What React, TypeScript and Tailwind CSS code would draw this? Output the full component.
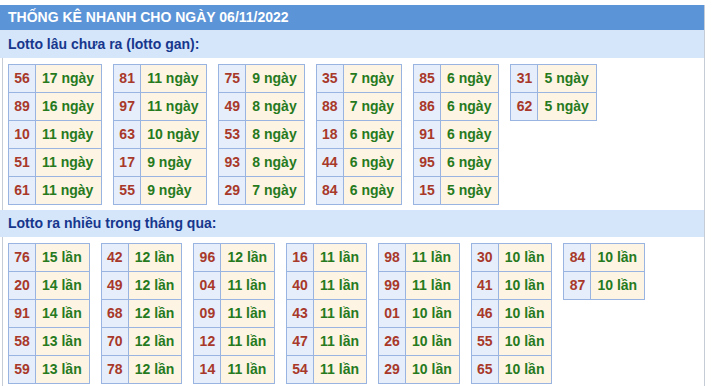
import React from "react";

type Row = [string, string];

const gan: Row[][] = [
  [["56", "17"], ["89", "16"], ["10", "11"], ["51", "11"], ["61", "11"]],
  [["81", "11"], ["97", "11"], ["63", "10"], ["17", "9"], ["55", "9"]],
  [["75", "9"], ["49", "8"], ["53", "8"], ["93", "8"], ["29", "7"]],
  [["35", "7"], ["88", "7"], ["18", "6"], ["44", "6"], ["84", "6"]],
  [["85", "6"], ["86", "6"], ["91", "6"], ["95", "6"], ["15", "5"]],
  [["31", "5"], ["62", "5"]],
];

const nhieu: Row[][] = [
  [["76", "15"], ["20", "14"], ["91", "14"], ["58", "13"], ["59", "13"]],
  [["42", "12"], ["49", "12"], ["68", "12"], ["70", "12"], ["78", "12"]],
  [["96", "12"], ["04", "11"], ["09", "11"], ["12", "11"], ["14", "11"]],
  [["16", "11"], ["40", "11"], ["43", "11"], ["47", "11"], ["54", "11"]],
  [["98", "11"], ["99", "11"], ["01", "10"], ["26", "10"], ["29", "10"]],
  [["30", "10"], ["41", "10"], ["46", "10"], ["55", "10"], ["65", "10"]],
  [["84", "10"], ["87", "10"]],
];

function Table({ rows, unit }: { rows: Row[]; unit: string }) {
  return (
    <div className="inline-grid grid-cols-[27px_auto] border-t border-l border-[#99b4e0]">
      {rows.map(([n, v], i) => (
        <React.Fragment key={i}>
          <div className="h-[28px] border-r border-b border-[#99b4e0] bg-[#e6eefb] text-[#a8392a] flex items-center justify-center">
            {n}
          </div>
          <div className="h-[28px] border-r border-b border-[#99b4e0] bg-[#fef4e3] text-[#267a1e] flex items-center pl-[6px] pr-[7px] whitespace-nowrap">
            {v} {unit}
          </div>
        </React.Fragment>
      ))}
    </div>
  );
}

function Sub({ children, h }: { children: React.ReactNode; h: string }) {
  return (
    <div className={`${h} bg-[#d5e6fa] text-[#17378d] font-bold text-[14px] pl-[8px] flex items-center`}>
      {children}
    </div>
  );
}

export default function App() {
  return (
    <div
      className="w-[713px] h-[386px] bg-white pt-[5px] overflow-hidden"
      style={{ fontFamily: '"Liberation Sans", Arial, sans-serif' }}
    >
      <div className="w-[705px] border-r border-[#c6ccd6]">
        <div className="h-[25px] bg-[#5b94d7] text-white font-bold text-[14px] pl-[8px] flex items-center">
          THỐNG KÊ NHANH CHO NGÀY 06/11/2022
        </div>
        <Sub h="h-[28px]">Lotto lâu chưa ra (lotto gan):</Sub>
        <div className="ml-[2px] border-l border-[#c6ccd6] pl-[5px] pt-[6px] pb-[5px] flex items-start gap-[11px] font-bold text-[14px]">
          {gan.map((t, i) => (
            <Table key={i} rows={t} unit="ngày" />
          ))}
        </div>
        <Sub h="h-[27px]">Lotto ra nhiều trong tháng qua:</Sub>
        <div className="ml-[2px] border-l border-[#c6ccd6] pl-[5px] pt-[6px] pb-[5px] flex items-start gap-[11px] font-bold text-[14px]">
          {nhieu.map((t, i) => (
            <Table key={i} rows={t} unit="lần" />
          ))}
        </div>
      </div>
    </div>
  );
}
